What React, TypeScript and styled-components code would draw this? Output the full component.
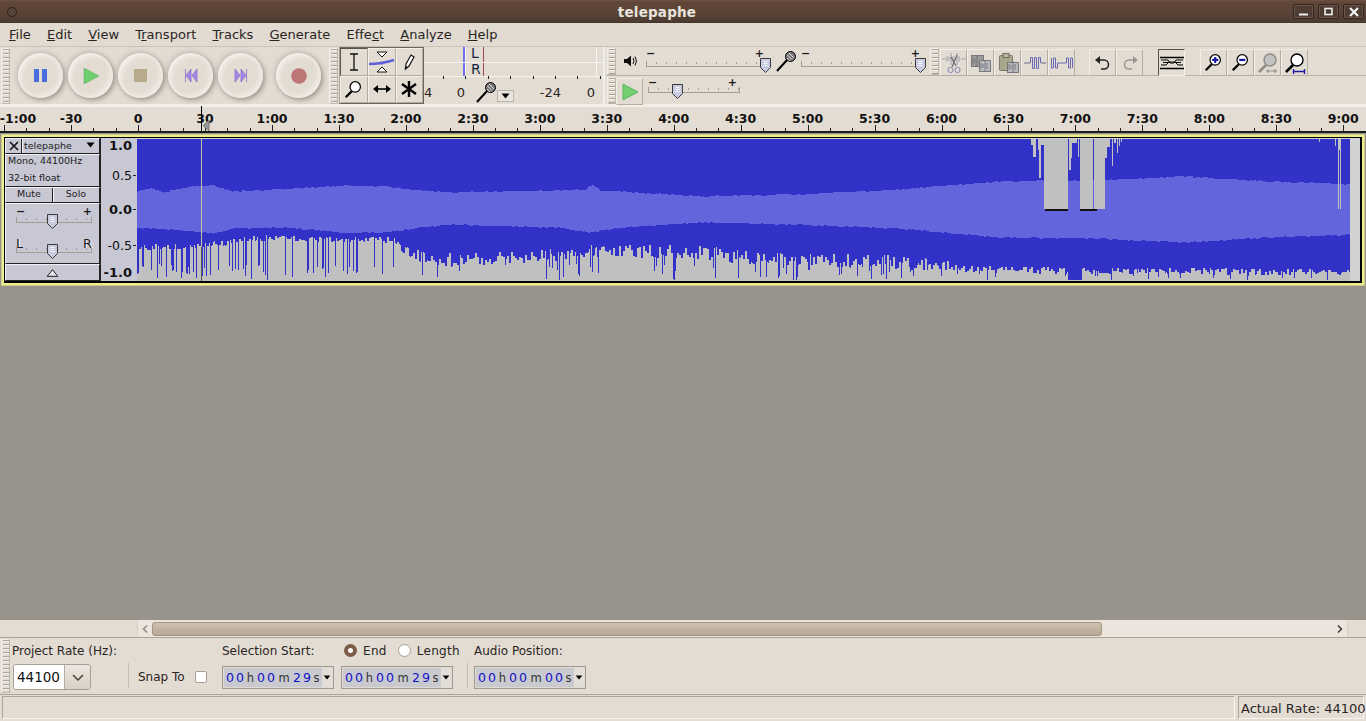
import React, { useMemo } from "react";
import styled, { createGlobalStyle } from "styled-components";

const GlobalStyle = createGlobalStyle`
  html, body { margin: 0; padding: 0; background: #98948c; }
  body { font-family: "DejaVu Sans", sans-serif; overflow: hidden; }
  * { box-sizing: border-box; }
`;

const Window = styled.div`
  width: 1366px;
  height: 721px;
  display: flex;
  flex-direction: column;
  background: #e3dcd3;
  color: #1e1a16;
`;

const TitleBar = styled.div`
  height: 23px;
  flex: none;
  display: flex;
  align-items: center;
  padding: 0 2px 0 7px;
  background: linear-gradient(#6e5244 0, #604638 2px, #5c4437 12px, #4b3b31 22px, #3e312a 23px);
`;
const WinDot = styled.div`
  width: 10px;
  height: 10px;
  border-radius: 50%;
  border: 1px solid #2c211b;
  background: #57443a;
`;
const Title = styled.div`
  flex: 1;
  text-align: center;
  color: #e8e4de;
  font-weight: bold;
  font-size: 13.5px;
  padding-left: 4px;
  letter-spacing: 0.2px;
`;
const WinButtons = styled.div`
  display: flex;
  gap: 4px;
`;
const WinButton = styled.div`
  width: 21px;
  height: 15px;
  border: 1px solid #2f2520;
  border-radius: 2px;
  box-shadow: inset 0 0 0 1px #6d5547;
  background: #4e3c32;
  display: flex;
  align-items: center;
  justify-content: center;
`;

const MenuBar = styled.div`
  height: 24px;
  flex: none;
  display: flex;
  align-items: center;
  gap: 16px;
  padding-left: 9px;
  font-size: 13px;
  letter-spacing: 0.03px;
  background: #e1dbd1;
  border-bottom: 1px solid #c9c2b8;
  color: #2a251f;
`;
const MenuItem = styled.span`
  white-space: pre;
`;
const Mn = styled.span`
  text-decoration: underline;
`;

const Dock = styled.div`
  height: 59px;
  flex: none;
  display: flex;
  background: #e3dcd3;
  border-bottom: 2px solid #f2eee8;
`;
const Grip = styled.div<{ $h?: number }>`
  width: 9px;
  flex: none;
  height: ${(p) => p.$h ?? 56}px;
  margin: 1px 0 0 1px;
  border: 1px solid #f2eee8;
  border-right-color: #bdb6ac;
  border-bottom-color: #bdb6ac;
  background:
    repeating-linear-gradient(#a8a29a 0 1px, #f4f0ea 1px 2px, transparent 2px 4px) center / 6px 100% no-repeat;
`;

const TransportBar = styled.div`
  width: 328px;
  flex: none;
  display: flex;
  align-items: flex-start;
`;
const RoundRow = styled.div`
  display: flex;
  gap: 5px;
  padding: 6px 0 0 8px;
`;
const RoundButton = styled.div<{ $gapLeft?: number }>`
  width: 45px;
  height: 45px;
  margin-left: ${(p) => p.$gapLeft ?? 0}px;
  border-radius: 50%;
  display: flex;
  align-items: center;
  justify-content: center;
  background: #e3dcd3;
  box-shadow:
    2px 2px 5px rgba(90, 84, 76, 0.5),
    -2px -2px 5px rgba(150, 144, 136, 0.28),
    inset 3px 3px 4px #f3efe9,
    inset -3px -3px 4px #f0ebe4;
`;

const ToolsBar = styled.div`
  width: 96px;
  flex: none;
  display: flex;
`;
const ToolGrid = styled.div`
  flex: 1;
  height: 57px;
  margin-left: 1px;
  display: grid;
  grid-template-columns: repeat(3, 1fr);
  grid-template-rows: repeat(2, 1fr);
  border: 1px solid #69655f;
  border-left: 1px solid #a8a299;
  background: #e3dcd3;
`;
const ToolCell = styled.div<{ $down?: boolean }>`
  display: flex;
  align-items: center;
  justify-content: center;
  border-right: 1px solid #b1aaa0;
  border-bottom: 1px solid #b1aaa0;
  border-top: 1px solid ${(p) => (p.$down ? "#57534d" : "#f4f0ea")};
  border-left: 1px solid ${(p) => (p.$down ? "#57534d" : "#f4f0ea")};
`;

const MeterBox = styled.div`
  width: 181px;
  flex: none;
  display: flex;
  flex-direction: column;
  border-right: 2px solid #f2eee8;
`;
const MeterStrips = styled.div`
  height: 29px;
  display: flex;
  flex-direction: column;
`;
const MeterRow = styled.div`
  flex: 1;
  display: flex;
  border-bottom: 1px solid #f7f4f0;
  &:first-child { flex: 0 0 16px; }
`;
const MeterLeft = styled.div`
  width: 41px;
  border-right: 2px solid #6f6fe6;
`;
const MeterEdge = styled.div`
  width: 5px;
  border-left: 1px solid #f7f4f0;
`;
const MeterLetter = styled.div`
  width: 14px;
  padding-left: 1px;
  font-size: 14px;
  line-height: 13px;
  color: #15233d;
  border-right: 1px solid #9a4a4a;
  background: #e3dcd3;
`;
const MeterRight = styled.div`
  flex: 1;
  margin-right: 6px;
  border-right: 1px solid #f7f4f0;
  background: #e3dcd3;
`;
const MeterScale = styled.div`
  flex: 1;
  display: flex;
  align-items: center;
  font-size: 13px;
  color: #2a251f;
  padding-top: 2px;
  background: repeating-linear-gradient(90deg, #1c1c1c 0 1px, transparent 1px 22.4px) 19px 0 / 100% 3px no-repeat;
`;
const ScaleNum = styled.span<{ $w: number; $right?: boolean }>`
  width: ${(p) => p.$w}px;
  flex: none;
  text-align: ${(p) => (p.$right ? "right" : "left")};
`;
const DropMini = styled.div`
  width: 17px;
  height: 12px;
  margin: 8px 0 0 -1px;
  flex: none;
  border: 1px solid #b8b1a7;
  background: #eae5dd;
  display: flex;
  align-items: center;
  justify-content: center;
`;

const RightStack = styled.div`
  flex: 1;
  display: flex;
  flex-direction: column;
  padding-left: 1px;
`;
const RowA = styled.div`
  height: 29px;
  display: flex;
  align-items: flex-start;
  border-bottom: 1px solid #b9b2a8;
`;
const RowB = styled.div`
  flex: 1;
  display: flex;
  align-items: flex-start;
`;
const IconHolder = styled.div<{ $w: number; $ml?: number }>`
  width: ${(p) => p.$w}px;
  height: 28px;
  margin-left: ${(p) => p.$ml ?? 0}px;
  flex: none;
  display: flex;
  align-items: center;
  justify-content: center;
`;
const EditButton = styled.div<{ $ml?: number; $down?: boolean }>`
  width: 27px;
  height: 27px;
  margin: 2px 0 0 ${(p) => p.$ml ?? 0}px;
  flex: none;
  display: flex;
  align-items: center;
  justify-content: center;
  border: 1px solid;
  border-color: ${(p) =>
    p.$down ? "#55514b #f8f5f0 #f8f5f0 #55514b" : "#f2eee8 #b4ada3 #b4ada3 #f2eee8"};
`;
const GripGap = styled.div<{ $w: number }>`
  width: ${(p) => p.$w}px;
  flex: none;
`;

const SliderWrap = styled.div<{ $w: number; $ml?: number; $h?: number }>`
  position: relative;
  width: ${(p) => p.$w}px;
  height: ${(p) => p.$h ?? 26}px;
  margin-left: ${(p) => p.$ml ?? 0}px;
  flex: none;
`;
const SliderRail = styled.div`
  position: absolute;
  left: 0;
  right: 0;
  bottom: 6px;
  height: 6px;
  border-bottom: 1px solid #a39d94;
  border-left: 1px solid #a39d94;
  border-right: 1px solid #a39d94;
  background: repeating-linear-gradient(90deg, #a39d94 0 1px, transparent 1px 10px) 9px 1px / 100% 2px no-repeat;
`;
const SliderMark = styled.span<{ $side: "left" | "right"; $inset: number; $big?: boolean }>`
  position: absolute;
  ${(p) => p.$side}: ${(p) => p.$inset}px;
  top: ${(p) => (p.$big ? 3 : 1)}px;
  font-size: ${(p) => (p.$big ? 13 : 11)}px;
  line-height: 12px;
  color: #1c1c1c;
  font-weight: ${(p) => (p.$big ? "normal" : "bold")};
  text-shadow: ${(p) => (p.$big ? "1px 0 0 #fff" : "none")};
`;
const SliderThumb = styled.svg<{ $at: number }>`
  position: absolute;
  left: ${(p) => p.$at - 5}px;
  bottom: 0;
`;

const RulerBar = styled.div`
  height: 27px;
  flex: none;
  background: #e3dcd3;
  border-bottom: 2px solid #1c1c1c;
  line-height: 0;
`;
const RulerText = styled.text`
  font-family: "DejaVu Sans", sans-serif;
  font-size: 12.5px;
  font-weight: bold;
  fill: #111;
`;
const VRulerText = styled.text<{ $bold?: boolean }>`
  font-family: "DejaVu Sans", sans-serif;
  font-size: ${(p) => (p.$bold ? 13 : 12.5)}px;
  font-weight: ${(p) => (p.$bold ? "bold" : "normal")};
  fill: #111;
`;

const TrackArea = styled.div`
  flex: 1;
  background: #98948c;
  padding: 2px 2px 0 2px;
`;
const TrackFrame = styled.div`
  width: 1362px;
  height: 150px;
  border: 2px solid #eeee8a;
  box-shadow: 0 0 0 1px #c9c98c;
`;
const TrackInner = styled.div`
  height: 100%;
  display: flex;
  border: 1px solid #000;
  border-width: 1px 2px 2px 1px;
  background: #c8c8d4;
`;
const TrackPanel = styled.div`
  width: 96px;
  flex: none;
  display: flex;
  flex-direction: column;
  font-size: 9.5px;
  color: #1c1c1c;
  background: #c8c8d4;
  border-right: 1px solid #222;
`;
const PanelRow = styled.div<{ $h: number }>`
  height: ${(p) => p.$h}px;
  flex: none;
  display: flex;
  border: 1px solid;
  border-color: #f0f0f6 #222 #222 #f0f0f6;
`;
const CloseBox = styled.div`
  width: 16px;
  flex: none;
  display: flex;
  align-items: center;
  justify-content: center;
  border-right: 1px solid #222;
`;
const TrackName = styled.div`
  flex: 1;
  display: flex;
  align-items: center;
  justify-content: space-between;
  padding: 0 3px 2px 1px;
  border-left: 1px solid #f0f0f6;
`;
const InfoBlock = styled(PanelRow)`
  flex-direction: column;
  padding: 0 2px;
  gap: 6px;
  line-height: 11px;
`;
const HalfButton = styled.div`
  flex: 1;
  display: flex;
  align-items: center;
  justify-content: center;
  padding-bottom: 3px;
  & + & {
    border-left: 1px solid #222;
    box-shadow: inset 1px 0 0 #f0f0f6;
  }
`;
const SliderBlock = styled(PanelRow)`
  flex-direction: column;
  padding: 1px 0 0 10px;
  gap: 6px;
`;
const CollapseRow = styled(PanelRow)`
  align-items: center;
  justify-content: center;
`;
const VRuler = styled.div`
  width: 36px;
  flex: none;
  line-height: 0;
  background: #c8c8d4;
`;
const WaveHolder = styled.div`
  flex: 1;
  display: flex;
  line-height: 0;
  padding-top: 1px;
  background: #d2d2d2;
`;

const ScrollRow = styled.div`
  height: 18px;
  flex: none;
  display: flex;
  background: #e3dcd3;
  border-bottom: 1px solid #aba499;
`;
const ScrollBlank = styled.div<{ $w: number }>`
  width: ${(p) => p.$w}px;
  flex: none;
`;
const Trough = styled.div`
  flex: 1;
  display: flex;
  align-items: center;
  background: #ebe5dd;
  border: 1px solid #d6cfc5;
  border-top: none;
  border-bottom: none;
`;
const ScrollArrow = styled.div`
  width: 14px;
  flex: none;
  display: flex;
  justify-content: center;
`;
const ScrollThumb = styled.div`
  width: 950px;
  height: 14px;
  flex: none;
  border: 1px solid #a3957f;
  border-radius: 3px;
  background: linear-gradient(#cfc2b2, #bfb09e 60%, #b7a999);
`;
const ScrollFill = styled.div`
  flex: 1;
`;

const SelectionBar = styled.div`
  height: 57px;
  flex: none;
  display: flex;
  font-size: 12px;
  color: #2a251f;
  border-bottom: 1px solid #aba499;
`;
const BarGroup = styled.div<{ $w: number; $pl?: number }>`
  width: ${(p) => p.$w}px;
  padding-left: ${(p) => p.$pl ?? 0}px;
  flex: none;
  display: flex;
  flex-direction: column;
  padding-top: 4px;
`;
const GroupLabel = styled.div<{ $w?: number }>`
  height: 17px;
  ${(p) => (p.$w ? `width: ${p.$w}px; flex: none;` : "")}
  display: flex;
  align-items: center;
  white-space: pre;
`;
const RateCombo = styled.div`
  display: flex;
  width: 78px;
  height: 26px;
  margin-top: 5px;
  margin-left: 1px;
  border: 1px solid #a79f93;
  border-radius: 3px;
  overflow: hidden;
`;
const RateInput = styled.div`
  width: 50px;
  background: #fff;
  font-size: 13.5px;
  display: flex;
  align-items: center;
  padding-left: 3px;
  color: #111;
`;
const RateDrop = styled.div`
  flex: 1;
  display: flex;
  align-items: center;
  justify-content: center;
  background: linear-gradient(#ece7e0, #d8d0c5);
  border-left: 1px solid #b5ada1;
`;
const VSep = styled.div<{ $mr?: number }>`
  width: 1px;
  height: 25px;
  flex: none;
  margin: 25px ${(p) => p.$mr ?? 0}px 0 0;
  background: #c5bdb1;
`;
const SnapGroup = styled.div`
  width: 84px;
  flex: none;
  padding-top: 32px;
  display: flex;
  align-items: flex-start;
  gap: 10px;
`;
const CheckBox = styled.div`
  width: 12px;
  height: 12px;
  margin-top: 1px;
  background: #fff;
  border: 1px solid #a79f93;
  border-radius: 2px;
`;
const Radio = styled.div<{ $on?: boolean; $ml?: number }>`
  width: 13px;
  height: 13px;
  margin-left: ${(p) => p.$ml ?? 0}px;
  border-radius: 50%;
  border: ${(p) => (p.$on ? "4px solid #7d5a45" : "1px solid #a79f93")};
  background: #fff;
  flex: none;
`;
const HeaderRow = styled.div`
  height: 17px;
  display: flex;
  align-items: center;
`;
const RadioRow = styled.div`
  display: flex;
  align-items: center;
  gap: 6px;
  white-space: pre;
`;
const RadioText = styled.span`
  letter-spacing: 0.3px;
`;
const TimeRow = styled.div`
  display: flex;
  gap: 7px;
  margin-top: 7px;
`;
const TimeBox = styled.div`
  width: 112px;
  height: 23px;
  flex: none;
  display: flex;
  align-items: center;
  padding-left: 2px;
  background: #c9c9d0;
  border: 1px solid #a09a90;
  box-shadow: inset 0 0 0 1px #dedad3;
`;
const Digit = styled.span`
  width: 10px;
  flex: none;
  text-align: center;
  color: #1010c8;
  font-size: 12.5px;
`;
const Unit = styled.span<{ $w: number }>`
  width: ${(p) => p.$w}px;
  flex: none;
  text-align: center;
  font-size: 11.5px;
  color: #333;
`;
const TimeDrop = styled.div`
  width: 10px;
  height: 19px;
  margin-left: auto;
  margin-right: 1px;
  flex: none;
  background: #e3dfd8;
  display: flex;
  align-items: center;
  justify-content: center;
`;

const StatusBar = styled.div`
  height: 26px;
  flex: none;
  display: flex;
  gap: 3px;
  padding: 1px 2px 2px;
  font-size: 13px;
  color: #2a251f;
`;
const StatusField = styled.div<{ $w?: number; $grip?: boolean }>`
  ${(p) => (p.$w ? `width: ${p.$w}px; flex: none;` : "flex: 1;")}
  display: flex;
  align-items: center;
  padding: 2px 0 0 2px;
  border: 1px solid;
  border-color: #aba499 #f8f5f0 #f8f5f0 #aba499;
  white-space: pre;
  ${(p) =>
    p.$grip
      ? `background:
    repeating-linear-gradient(90deg, #f7f4ef 0 1px, transparent 1px 3px) right 0 bottom 1px / 9px 1px no-repeat,
    repeating-linear-gradient(90deg, #f7f4ef 0 1px, transparent 1px 3px) right 0 bottom 4px / 6px 1px no-repeat;`
      : ""}
`;

const Tri = ({ w = 8, h = 5, up = false, c = "#000", line }: { w?: number; h?: number; up?: boolean; c?: string; line?: string }) => (
  <svg width={w} height={h} viewBox="-0.5 -0.5 9 6">
    <path d={up ? "M4 0 L8 5 H0 Z" : "M0 0 H8 L4 5 Z"} fill={c} stroke={line} strokeWidth="0.7" />
  </svg>
);

const Thumb = ({ at }: { at: number }) => (
  <SliderThumb $at={at} width="11" height="15" viewBox="0 0 11 15">
    <path d="M0.5 0.5 H10.5 V9.5 L5.5 14.5 L0.5 9.5 Z" fill="#c9cbe0" stroke="#3a3a3a" />
    <path d="M3.5 3.5 H7.5 M3.5 5.5 H7.5 M3.5 7.5 H7.5" stroke="#f6f6fb" />
  </SliderThumb>
);

type SliderProps = { w: number; at: number; ml?: number; h?: number; lr?: boolean; plusInset?: number };
const Slider = ({ w, at, ml, h, lr, plusInset = 0 }: SliderProps) => (
  <SliderWrap $w={w} $ml={ml} $h={h}>
    <SliderMark $side="left" $inset={0} $big={lr}>{lr ? "L" : "−"}</SliderMark>
    <SliderMark $side="right" $inset={plusInset} $big={lr}>{lr ? "R" : "+"}</SliderMark>
    <SliderRail />
    <Thumb at={at} />
  </SliderWrap>
);

const Lens = ({ children, faded, size = 19 }: { children?: React.ReactNode; faded?: boolean; size?: number }) => {
  const c = faded ? "#8f8b85" : "#000";
  return (
    <svg width={size} height={size} viewBox="0 0 22 22">
      <path d="M9 13 L2 20" stroke={c} strokeWidth="2.6" />
      <circle cx="13" cy="8" r="6" fill={faded ? "#c2c2c2" : "#fff"} stroke={c} strokeWidth="1.4" />
      {children}
    </svg>
  );
};

const Mic = () => (
  <svg width="22" height="22" viewBox="0 0 22 22">
    <path d="M2 21 L12 10" stroke="#000" strokeWidth="2" />
    <circle cx="15.5" cy="6.5" r="5" fill="#777" stroke="#000" />
    <path d="M12.5 5 L17 9.5 M14 3 L19 8 M12 8 L15 11" stroke="#ddd" />
  </svg>
);

const waveSmall = (x: number, y: number, w: number, c: string) => {
  let d = "";
  for (let i = 0; i < w; i += 2) {
    const a = [3, 5, 2, 4, 6, 3][i % 6];
    d += `M${x + i} ${y - a} V${y + a} `;
  }
  return <path d={d} stroke={c} strokeWidth="1" fill="none" />;
};

const CutIcon = () => (
  <svg width="24" height="24" viewBox="0 0 24 24">
    <path d="M0 8 H4" stroke="#a0a0a8" />
    {waveSmall(5, 8, 14, "#a0a0a8")}
    <path d="M19 8 H24" stroke="#a0a0a8" />
    <path d="M15 4 L10 16 M9 6 L14 15" stroke="#6a6a74" strokeWidth="1.2" />
    <circle cx="8.5" cy="19" r="2.6" fill="none" stroke="#8585b0" />
    <circle cx="15.5" cy="19" r="2.6" fill="none" stroke="#8585b0" />
  </svg>
);
const CopyIcon = () => (
  <svg width="24" height="24" viewBox="0 0 24 24">
    <rect x="2.5" y="4.5" width="12" height="11" fill="#9a9a9a" stroke="#77777d" />
    <rect x="10.5" y="9.5" width="11" height="11" fill="#b9b9bd" stroke="#77777d" />
    {waveSmall(12, 15, 8, "#7b7b85")}
    {waveSmall(4, 10, 6, "#777")}
  </svg>
);
const PasteIcon = () => (
  <svg width="24" height="24" viewBox="0 0 24 24">
    <rect x="3.5" y="4.5" width="13" height="15" rx="1" fill="#a9a68e" stroke="#7c7a68" />
    <rect x="7" y="2.5" width="6" height="4" fill="#bab7a5" stroke="#6d6b5c" />
    <rect x="11.5" y="11.5" width="11" height="10" fill="#b9b9bd" stroke="#77777d" />
    {waveSmall(13, 16, 8, "#7b7b85")}
  </svg>
);
const TrimIcon = () => (
  <svg width="24" height="24" viewBox="0 0 24 24">
    <path d="M1 12 H7 M18 12 H23" stroke="#6a6a8a" />
    <path d="M7.5 12 V6.5 H9.5 V17.5 H11.5 V6.5 H13.5 V17.5 H15.5 V6.5 H17.5 V12" fill="none" stroke="#6a6ab4" />
  </svg>
);
const SilenceIcon = () => (
  <svg width="24" height="24" viewBox="0 0 24 24">
    <path d="M1.5 7 V17 H3.5 V7 H5.5 V17 H7.5 V12 H16.5 V7 H18.5 V17 H20.5 V7 H22.5 V17" fill="none" stroke="#6a6ab4" />
  </svg>
);
const UndoIcon = ({ c, flip }: { c: string; flip?: boolean }) => (
  <svg width="20" height="20" viewBox="0 0 20 20" style={flip ? { transform: "scaleX(-1)" } : undefined}>
    <path d="M5 7 H11 A4.5 4.5 0 0 1 11 16 H8" fill="none" stroke={c} strokeWidth="1.5" />
    <path d="M2 7 L7 3 V11 Z" fill={c} />
  </svg>
);
const SyncIcon = () => (
  <svg width="24" height="14" viewBox="0 0 24 14">
    <path d="M0 1.5 H24 M0 12.5 H24" stroke="#000" strokeWidth="1.5" />
    <path d="M1 4 H8 L10 7 H14 L16 4 H23 M1 9 H6 L9 6 H15 L18 9 H23 M3 6.5 H8 M16 6.5 H21" stroke="#000" fill="none" />
  </svg>
);
const SpeakerIcon = () => (
  <svg width="16" height="16" viewBox="0 0 16 16">
    <path d="M1 6 H4 L8 2.5 V13.5 L4 10 H1 Z" fill="#111" />
    <path d="M10 5 Q12 8 10 11 M12 3.5 Q15 8 12 12.5" fill="none" stroke="#111" />
  </svg>
);

const Time = ({ s }: { s: string }) => (
  <TimeBox>
    <Digit>0</Digit>
    <Digit>0</Digit>
    <Unit $w={11}>h</Unit>
    <Digit>0</Digit>
    <Digit>0</Digit>
    <Unit $w={16}>m</Unit>
    <Digit>{s[0]}</Digit>
    <Digit>{s[1]}</Digit>
    <Unit $w={9}>s</Unit>
    <TimeDrop>
      <Tri w={8} h={5} />
    </TimeDrop>
  </TimeBox>
);

const lerp = (tbl: number[][], x: number) => {
  for (let i = 1; i < tbl.length; i++) {
    if (x <= tbl[i][0]) {
      const [x0, y0] = tbl[i - 1];
      const [x1, y1] = tbl[i];
      return y0 + ((y1 - y0) * (x - x0)) / (x1 - x0);
    }
  }
  return tbl[tbl.length - 1][1];
};

const rmsTop = [[137,192],[153,189],[163,193],[190,187],[213,186],[233,192],[283,190],[345,186],[385,187],[420,191],[450,193],[560,191],[585,190],[592,185],[600,191],[620,192],[700,197],[800,195],[900,190],[1000,182],[1100,181],[1183,177],[1267,182],[1350,185]];
const rmsBottom = [[137,227],[163,229],[190,230],[213,233],[233,228],[283,227],[345,232],[385,232],[420,227],[450,224],[560,227],[590,232],[620,227],[700,222],[800,224],[900,228],[1000,237],[1100,238],[1183,242],[1267,237],[1350,234]];
const peakBase = [[137,247],[200,246],[260,238],[395,240],[410,252],[440,260],[520,258],[600,250],[700,252],[750,258],[900,262],[950,268],[1068,271],[1350,272]];

// x start, x end, y end of the clipped notches at the top of the wave
const notches = [
  [1031,1033,145],[1033,1036,157],[1038,1039,150],[1039,1041,178],[1041,1044,145],[1044,1068,209],
  [1069,1071,170],[1071,1072,158],[1072,1077,143],[1078,1079,157],[1080,1093,209],[1094,1103,209],
  [1103,1105,209],[1105,1107,158],[1107,1110,147],[1112,1113,166],[1114,1116,143],[1117,1118,153],
  [1119,1120,146],[1121,1122,142],[1319,1320,142],[1335,1336,146],[1338,1339,209],[1339,1340,150],[1340,1341,209],
];

const Wave = () => {
  const { peak, rms, gray, fringe } = useMemo(() => {
    let seed = 93;
    const rnd = () => {
      seed = (seed * 1664525 + 1013904223) % 4294967296;
      return seed / 4294967296;
    };
    const X0 = 137;
    const Y0 = 139;
    let p = "";
    let r = "";
    let t = 0;
    let b = 0;
    let g = 0;
    for (let x = X0; x < 1350; x++) {
      if ((x - X0) % 3 === 0) {
        t = rnd() * 1.2;
        b = rnd() * 1.2;
      }
      if ((x - X0) % 2 === 0) {
        const spread = x > 400 && x < 950 ? 14 : x < 400 ? 6 : 7;
        g = (rnd() - 0.5) * spread;
      }
      let bot = lerp(peakBase, x) + g;
      // deep spikes come in clusters, thick at the very start of the track
      const cluster = Math.sin(x / 17) + Math.sin(x / 41) > 0.2;
      let spike = 0.03;
      if (x < 235) spike = 0.3;
      else if (x < 950) spike = cluster ? 0.2 : 0.05;
      else spike = 0.08;
      if (rnd() < spike) bot = 280 - rnd() * (x < 950 ? 16 : 8);
      if (x >= 1068 && x < 1082) bot = 280;
      bot = Math.round(Math.min(bot, 280));
      p += `M${x - X0} 0V${bot - Y0}h1V0Z`;
      const a = Math.round(lerp(rmsTop, x) - t);
      const c = Math.round(lerp(rmsBottom, x) + b);
      r += `M${x - X0} ${a - Y0}V${c - Y0}h1V${a - Y0}Z`;
    }
    const n = notches.map(([a, c, y]) => `M${a - X0} 0V${y - Y0}H${c - X0}V0Z`).join("");
    const f = `M${1045 - X0} 70h23v1.5h-23ZM${1080 - X0} 70h17v1.5h-17Z`;
    return { peak: p, rms: r, gray: n, fringe: f };
  }, []);
  return (
    <svg width="1213" height="142" viewBox="0 0 1213 142" shapeRendering="crispEdges">
      <rect width="1213" height="142" fill="#c0c0c0" />
      <path d={peak} fill="#3232c8" />
      <path d={rms} fill="#6464dc" />
      <path d={gray} fill="#c0c0c0" />
      <path d={fringe} fill="#111" />
      <path d="M64.5 0 V108" stroke="#c4c49a" />
      <path d="M64.5 108 V142" stroke="#555" />
    </svg>
  );
};

const labels = ["1:00","1:30","2:00","2:30","3:00","3:30","4:00","4:30","5:00","5:30","6:00","6:30","7:00","7:30","8:00","8:30","9:00"];

const TimeRuler = () => {
  const ticks: React.ReactNode[] = [];
  for (let i = -6; i <= 55; i++) {
    const x = Math.round(138 + i * 22.32) + 0.5;
    const major = i % 3 === 0;
    ticks.push(<path key={i} d={`M${x} ${major ? 19 : 22} V25`} stroke="#222" />);
  }
  return (
    <svg width="1366" height="25" viewBox="0 0 1366 25">
      <path d="M0 0.5 H1366" stroke="#f2eee8" />
      {ticks}
      <RulerText x="18" y="17" textAnchor="middle">-1:00</RulerText>
      <RulerText x="71" y="17" textAnchor="middle">-30</RulerText>
      <RulerText x="138" y="17" textAnchor="middle">0</RulerText>
      <RulerText x="205" y="17" textAnchor="middle">30</RulerText>
      {labels.map((l, i) => (
        <RulerText key={l} x={272 + i * 66.95} y="17" textAnchor="middle">{l}</RulerText>
      ))}
      <path d="M201.5 0 V25" stroke="#000" />
      <path d="M209 14 V25 L203 19.5 Z" fill="#9a9a9a" stroke="#777" />
    </svg>
  );
};

const AmpRuler = () => (
  <svg width="36" height="143" viewBox="0 0 36 143">
    <VRulerText $bold x="31" y="12" textAnchor="end">1.0</VRulerText>
    <VRulerText x="31" y="42" textAnchor="end">0.5</VRulerText>
    <VRulerText $bold x="31" y="76" textAnchor="end">0.0</VRulerText>
    <VRulerText x="31" y="112" textAnchor="end">-0.5</VRulerText>
    <VRulerText $bold x="31" y="139" textAnchor="end">-1.0</VRulerText>
    <path d="M32 37.5 H35 M32 71.5 H35 M32 107.5 H35" stroke="#222" />
  </svg>
);

const menus: [string, string, string][] = [
  ["", "F", "ile"],
  ["", "E", "dit"],
  ["", "V", "iew"],
  ["T", "r", "ansport"],
  ["", "T", "racks"],
  ["", "G", "enerate"],
  ["Effe", "c", "t"],
  ["", "A", "nalyze"],
  ["", "H", "elp"],
];

export default function App() {
  return (
    <Window>
      <GlobalStyle />
      <TitleBar>
        <WinDot />
        <Title>telepaphe</Title>
        <WinButtons>
          <WinButton>
            <svg width="9" height="9" viewBox="0 0 9 9"><path d="M0 7.5 H9" stroke="#eee" strokeWidth="2" /></svg>
          </WinButton>
          <WinButton>
            <svg width="9" height="9" viewBox="0 0 9 9"><rect x="1" y="1.5" width="7" height="6" fill="none" stroke="#eee" strokeWidth="1.6" /></svg>
          </WinButton>
          <WinButton>
            <svg width="10" height="10" viewBox="0 0 10 10"><path d="M1 1 L9 9 M9 1 L1 9" stroke="#f2f2f2" strokeWidth="2.2" /></svg>
          </WinButton>
        </WinButtons>
      </TitleBar>

      <MenuBar>
        {menus.map(([a, m, b]) => (
          <MenuItem key={a + m + b}>
            {a}
            <Mn>{m}</Mn>
            {b}
          </MenuItem>
        ))}
      </MenuBar>

      <Dock>
        <TransportBar>
          <Grip />
          <RoundRow>
            <RoundButton>
              <svg width="14" height="13" viewBox="0 0 14 13"><path d="M0 0 H5 V13 H0 Z M8 0 H13 V13 H8 Z" fill="#4a6ee0" /></svg>
            </RoundButton>
            <RoundButton>
              <svg width="16" height="16" viewBox="0 0 16 16"><path d="M1 0 L16 8 L1 16 Z" fill="#6fcf6f" stroke="#57a857" strokeWidth="0.5" /></svg>
            </RoundButton>
            <RoundButton>
              <svg width="13" height="13" viewBox="0 0 13 13"><rect width="13" height="13" fill="#b8ab8c" /></svg>
            </RoundButton>
            <RoundButton>
              <svg width="14" height="13" viewBox="0 0 14 13"><path d="M1.5 0 V13 M7 0 L2 6.5 L7 13 Z M13 0 L8 6.5 L13 13 Z" fill="#a98ae2" stroke="#8d6fd0" strokeWidth="0.8" /></svg>
            </RoundButton>
            <RoundButton>
              <svg width="14" height="13" viewBox="0 0 14 13"><path d="M12.5 0 V13 M7 0 L12 6.5 L7 13 Z M1 0 L6 6.5 L1 13 Z" fill="#a98ae2" stroke="#8d6fd0" strokeWidth="0.8" /></svg>
            </RoundButton>
            <RoundButton $gapLeft={8}>
              <svg width="16" height="16" viewBox="0 0 16 16"><circle cx="8" cy="8" r="7.8" fill="#bd7676" /></svg>
            </RoundButton>
          </RoundRow>
        </TransportBar>

        <ToolsBar>
          <Grip />
          <ToolGrid>
            <ToolCell $down>
              <svg width="12" height="18" viewBox="0 0 12 18"><path d="M2 1 H10 M2 17 H10 M6 1 V17" stroke="#111" strokeWidth="1.3" /></svg>
            </ToolCell>
            <ToolCell>
              <svg width="26" height="22" viewBox="0 0 26 22">
                <path d="M8 1 H18 L13 6 Z M8 21 H18 L13 16 Z" fill="#fff" stroke="#111" />
                <path d="M0 13 Q12 13 25 9" fill="none" stroke="#5f5fdc" strokeWidth="2.4" />
                <circle cx="13" cy="12" r="1.6" fill="#5f5fdc" />
              </svg>
            </ToolCell>
            <ToolCell>
              <svg width="14" height="18" viewBox="0 0 14 18"><path d="M4 11 L9 2 L12 4 L7 13 L3.5 16 Z" fill="#fff" stroke="#111" strokeWidth="1.2" /><path d="M3.5 16 L4 13" stroke="#111" strokeWidth="1.5" /></svg>
            </ToolCell>
            <ToolCell><Lens /></ToolCell>
            <ToolCell>
              <svg width="18" height="10" viewBox="0 0 18 10"><path d="M4 5 H14" stroke="#000" strokeWidth="1.6" /><path d="M0 5 L5 1 V9 Z M18 5 L13 1 V9 Z" fill="#000" /></svg>
            </ToolCell>
            <ToolCell>
              <svg width="16" height="18" viewBox="0 0 16 18"><path d="M8 1 V17 M1 4 L15 14 M15 4 L1 14" stroke="#000" strokeWidth="2.4" /></svg>
            </ToolCell>
          </ToolGrid>
        </ToolsBar>

        <MeterBox>
          <MeterStrips>
            <MeterRow>
              <MeterLeft /><MeterEdge /><MeterLetter>L</MeterLetter><MeterRight />
            </MeterRow>
            <MeterRow>
              <MeterLeft /><MeterEdge /><MeterLetter>R</MeterLetter><MeterRight />
            </MeterRow>
          </MeterStrips>
          <MeterScale>
            <ScaleNum $w={8}>4</ScaleNum>
            <ScaleNum $w={33} $right>0</ScaleNum>
            <IconHolder $w={24} $ml={9}><Mic /></IconHolder>
            <DropMini><Tri w={11} h={6} /></DropMini>
            <ScaleNum $w={47} $right>-24</ScaleNum>
            <ScaleNum $w={34} $right>0</ScaleNum>
          </MeterScale>
        </MeterBox>

        <RightStack>
          <RowA>
            <Grip $h={27} />
            <IconHolder $w={30}><SpeakerIcon /></IconHolder>
            <Slider w={120} at={119} plusInset={2} />
            <IconHolder $w={22} $ml={9}><Mic /></IconHolder>
            <Slider w={124} at={119} ml={4} plusInset={5} />
            <GripGap $w={4} />
            <Grip $h={27} />
            <EditButton $ml={1}><CutIcon /></EditButton>
            <EditButton><CopyIcon /></EditButton>
            <EditButton><PasteIcon /></EditButton>
            <EditButton><TrimIcon /></EditButton>
            <EditButton><SilenceIcon /></EditButton>
            <EditButton $ml={14}><UndoIcon c="#222" /></EditButton>
            <EditButton><UndoIcon c="#9a9690" flip /></EditButton>
            <EditButton $ml={15} $down><SyncIcon /></EditButton>
            <EditButton $ml={15}>
              <Lens>
                <path d="M9.5 8 H16.5 M13 4.5 V11.5" stroke="#1a1aa0" strokeWidth="2.4" />
              </Lens>
            </EditButton>
            <EditButton>
              <Lens>
                <path d="M9.5 8 H16.5" stroke="#1a1aa0" strokeWidth="2.6" />
              </Lens>
            </EditButton>
            <EditButton>
              <Lens faded size={22}>
                <path d="M9 19 H20 M11 17 V21 M18 17 V21" stroke="#8f8b85" />
              </Lens>
            </EditButton>
            <EditButton>
              <Lens size={22}>
                <path d="M9 19.5 H21 M9.5 17 V22 M20.5 17 V22" stroke="#1a1aa0" strokeWidth="1.4" />
              </Lens>
            </EditButton>
          </RowA>
          <RowB>
            <Grip $h={27} />
            <EditButton>
              <svg width="18" height="18" viewBox="0 0 18 18"><path d="M2 1 L17 9 L2 17 Z" fill="#72cf72" stroke="#5eb65e" /></svg>
            </EditButton>
            <Slider w={92} at={29} ml={5} h={23} plusInset={3} />
          </RowB>
        </RightStack>
      </Dock>

      <RulerBar>
        <TimeRuler />
      </RulerBar>

      <TrackArea>
        <TrackFrame>
          <TrackInner>
            <TrackPanel>
              <PanelRow $h={16}>
                <CloseBox>
                  <svg width="10" height="10" viewBox="0 0 10 10"><path d="M1 1 L9 9 M9 1 L1 9" stroke="#111" strokeWidth="1.6" /></svg>
                </CloseBox>
                <TrackName>
                  telepaphe
                  <Tri w={11} h={6} />
                </TrackName>
              </PanelRow>
              <InfoBlock $h={33}>
                <span>Mono, 44100Hz</span>
                <span>32-bit float</span>
              </InfoBlock>
              <PanelRow $h={16}>
                <HalfButton>Mute</HalfButton>
                <HalfButton>Solo</HalfButton>
              </PanelRow>
              <SliderBlock $h={61}>
                <Slider w={76} at={36} h={24} />
                <Slider w={76} at={36} h={24} lr />
              </SliderBlock>
              <CollapseRow $h={17}>
                <Tri w={13} h={8} up c="#e4e4ee" line="#111" />
              </CollapseRow>
            </TrackPanel>
            <VRuler>
              <AmpRuler />
            </VRuler>
            <WaveHolder>
              <Wave />
            </WaveHolder>
          </TrackInner>
        </TrackFrame>
      </TrackArea>

      <ScrollRow>
        <ScrollBlank $w={137} />
        <Trough>
          <ScrollArrow>
            <svg width="6" height="8" viewBox="0 0 6 8"><path d="M5 0.5 L1.5 4 L5 7.5" fill="none" stroke="#8d867c" strokeWidth="1.4" /></svg>
          </ScrollArrow>
          <ScrollThumb />
          <ScrollFill />
          <ScrollArrow>
            <svg width="6" height="8" viewBox="0 0 6 8"><path d="M1 0.5 L4.5 4 L1 7.5" fill="none" stroke="#3a352f" strokeWidth="1.4" /></svg>
          </ScrollArrow>
        </Trough>
        <ScrollBlank $w={18} />
      </ScrollRow>

      <SelectionBar>
        <Grip $h={54} />
        <BarGroup $w={118} $pl={2}>
          <GroupLabel>Project Rate (Hz):</GroupLabel>
          <RateCombo>
            <RateInput>44100</RateInput>
            <RateDrop>
              <svg width="12" height="7" viewBox="0 0 12 7"><path d="M1 1 L6 6 L11 1" fill="none" stroke="#4a443c" strokeWidth="1.5" /></svg>
            </RateDrop>
          </RateCombo>
        </BarGroup>
        <VSep $mr={9} />
        <SnapGroup>
          Snap To
          <CheckBox />
        </SnapGroup>
        <BarGroup $w={245}>
          <HeaderRow>
            <GroupLabel $w={122}>Selection Start:</GroupLabel>
            <RadioRow>
              <Radio $on />
              <RadioText>End</RadioText>
              <Radio $ml={5} />
              <RadioText>Length</RadioText>
            </RadioRow>
          </HeaderRow>
          <TimeRow>
            <Time s="29" />
            <Time s="29" />
          </TimeRow>
        </BarGroup>
        <VSep $mr={6} />
        <BarGroup $w={120}>
          <GroupLabel>Audio Position:</GroupLabel>
          <TimeRow>
            <Time s="00" />
          </TimeRow>
        </BarGroup>
      </SelectionBar>

      <StatusBar>
        <StatusField />
        <StatusField $w={126} $grip>Actual Rate: 44100</StatusField>
      </StatusBar>
    </Window>
  );
}
